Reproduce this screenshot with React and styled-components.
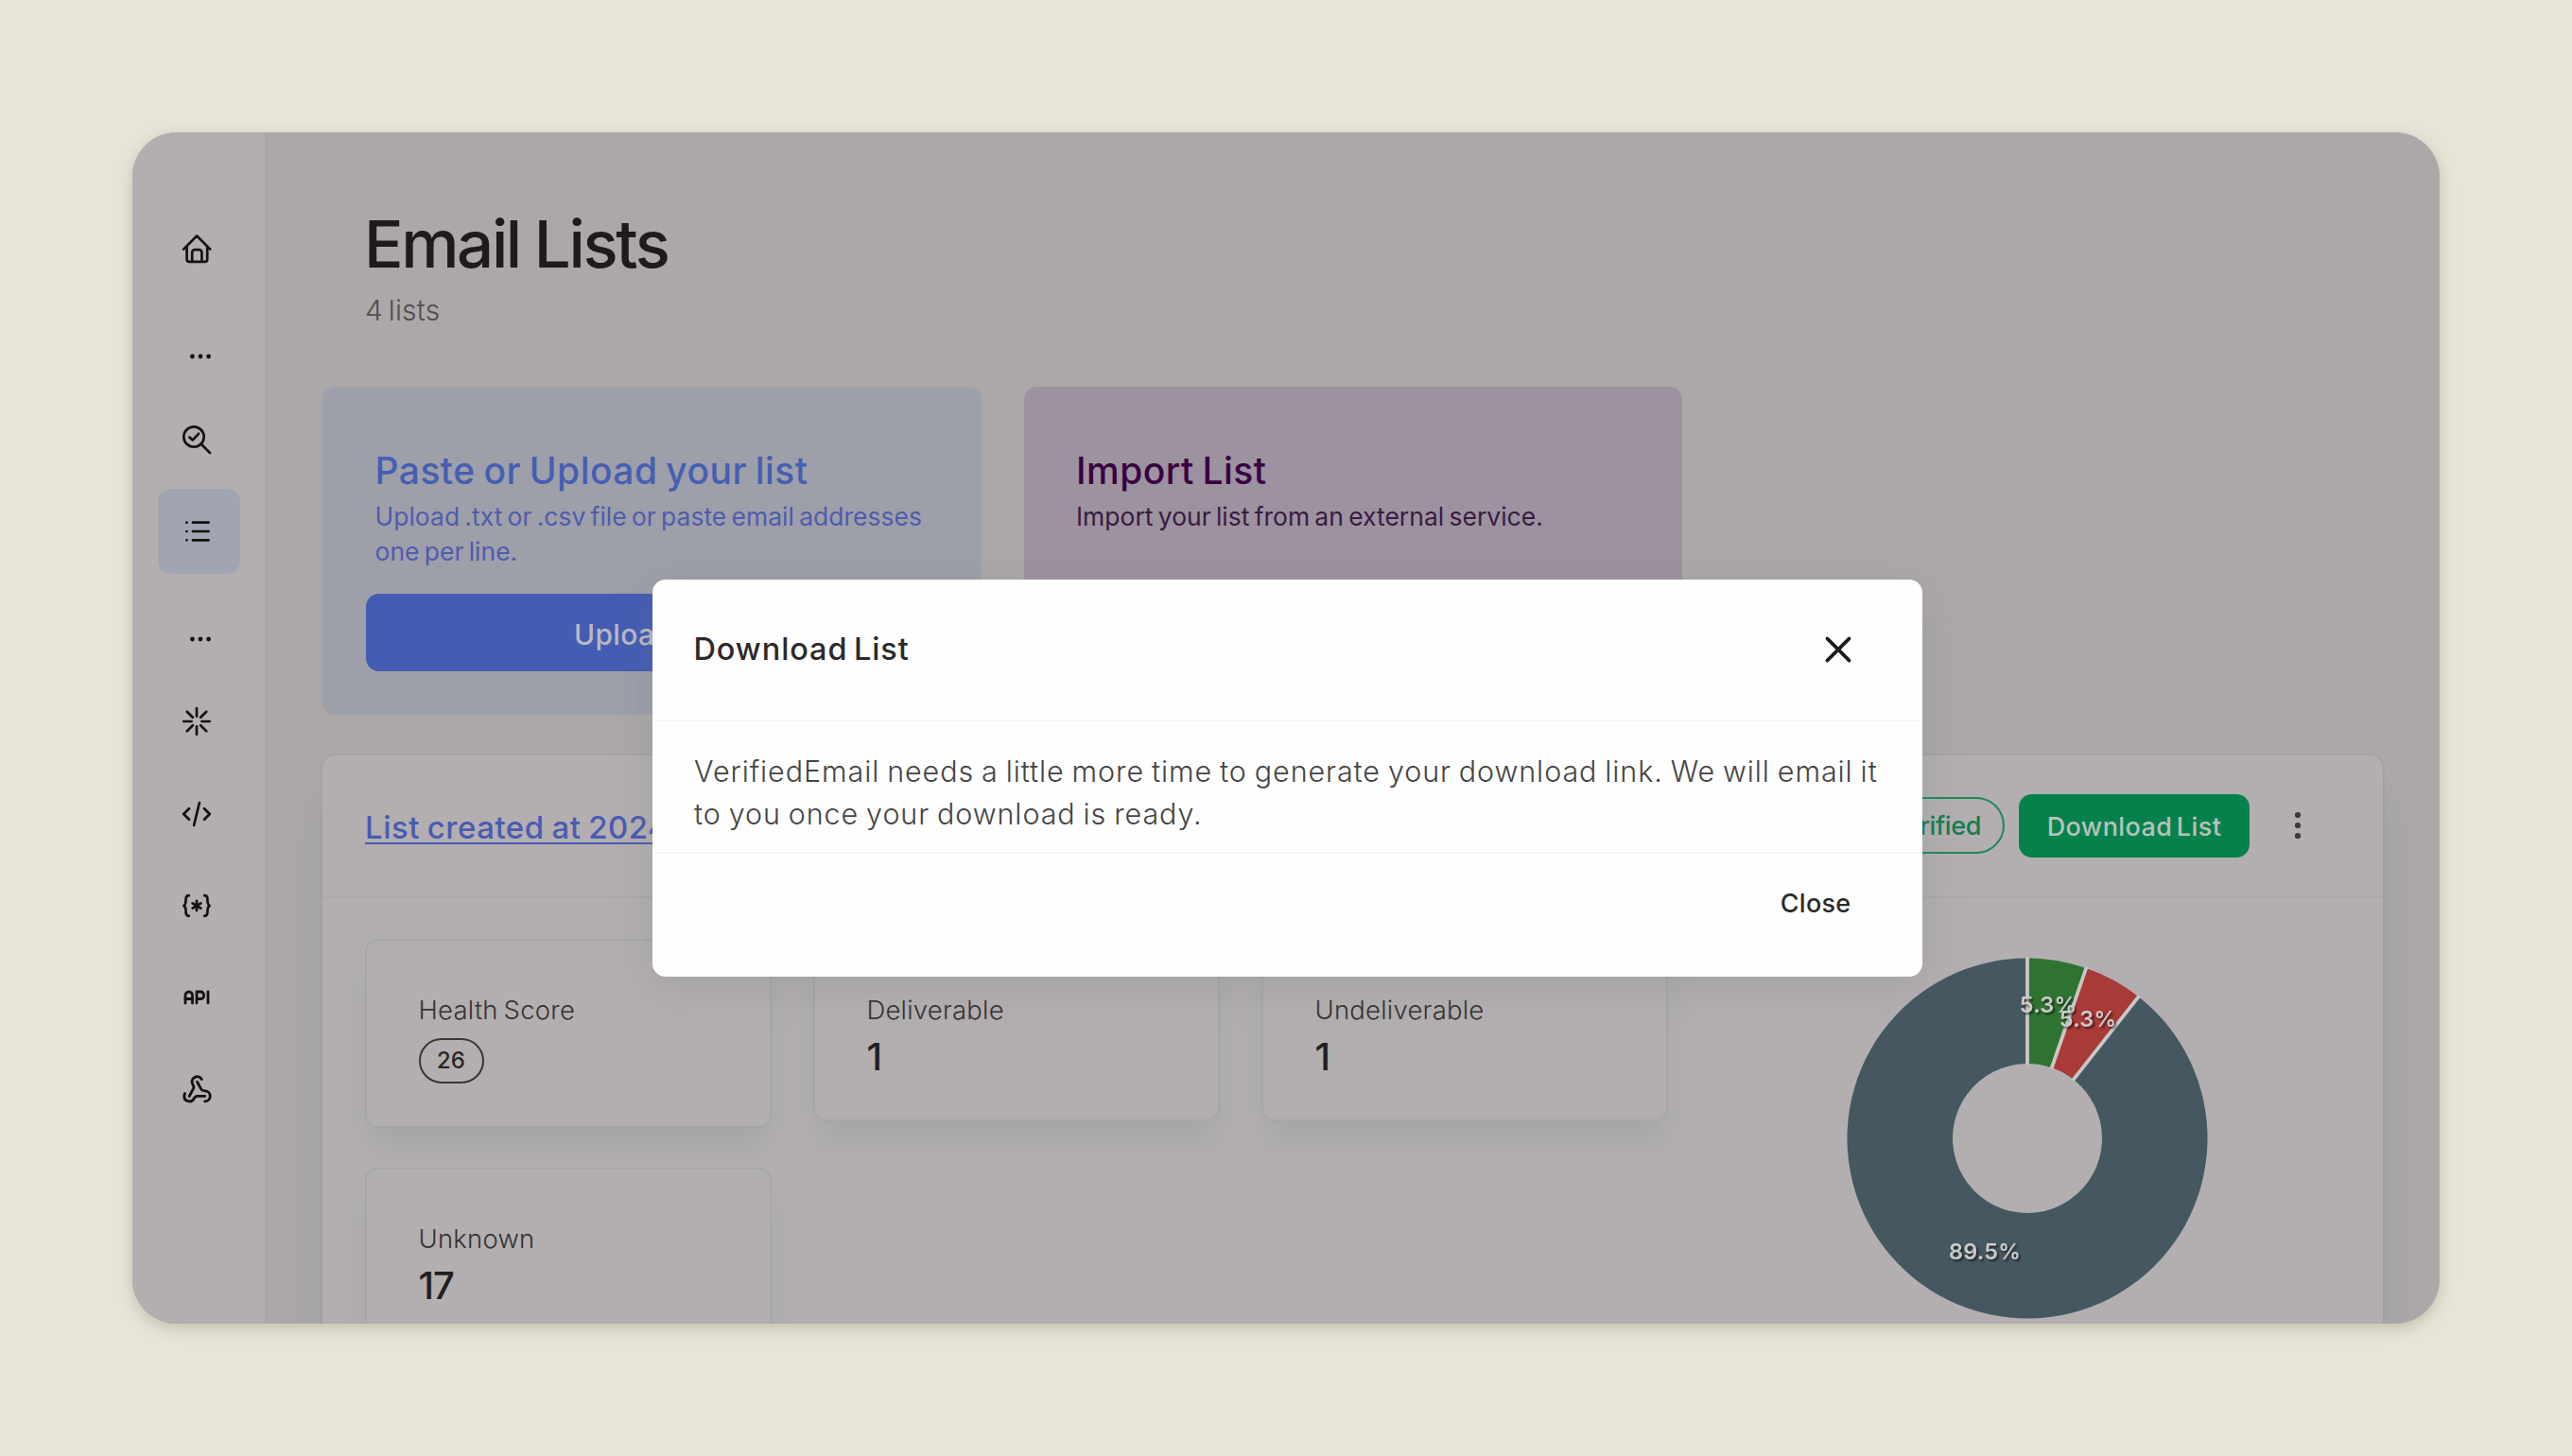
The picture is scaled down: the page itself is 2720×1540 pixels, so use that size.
import React, { useState } from 'react';
import styled, { createGlobalStyle, css } from 'styled-components';
import { Webhook } from 'lucide-react';
import { TbApi } from 'react-icons/tb';


const GlobalStyle = createGlobalStyle`
  *, *::before, *::after {
    box-sizing: border-box;
  }

  body {
    margin: 0;
    background: #e9e4d8;
    font-family: Inter, sans-serif;
    color: #1f1b1c;
  }

  h1, h2, p {
    margin: 0;
  }

  button {
    font-family: inherit;
    border: none;
    padding: 0;
    cursor: pointer;
  }
`;

const Page = styled.div`
  width: 2720px;
  height: 1540px;
  padding: 140px;
  background: #e9e4d8;
  overflow: hidden;
`;

const Window = styled.div`
  position: relative;
  display: flex;
  width: 2440px;
  height: 1260px;
  border-radius: 47px;
  overflow: hidden;
  background: #aca8a9;
  box-shadow: 0 5px 16px rgba(128, 134, 96, 0.38);
`;


/* sidebar */

const SSidebar = styled.nav`
  flex: none;
  display: flex;
  flex-direction: column;
  gap: 7.2px;
  width: 142px;
  padding: 78px 0 0 27px;
  background: #b3afb0;
  border-right: 2px solid #a8a4a5;
`;

const NavItem = styled.a`
  flex: none;
  display: flex;
  align-items: center;
  width: 87px;
  height: 90px;
  padding-left: 25px;
  border-radius: 14px;
  color: #141112;
  background: ${props => props.$active ? '#a0a5b1' : 'transparent'};

  svg {
    overflow: visible;
  }
`;

const NavGap = styled(NavItem)`
  height: 97.2px;
  padding: 27px 0 0 33px;
`;

const ApiIcon = styled(TbApi)`
  margin-left: -2px;
  stroke-width: 1.85px;
`;


/* page content */

const Content = styled.main`
  flex: 1;
  padding: 78px 59px 0;
`;

const Header = styled.header`
  padding-left: 44px;
  margin-bottom: 61px;
`;

const Title = styled.h1`
  font-size: 69px;
  line-height: 80px;
  font-weight: 500;
  letter-spacing: -2.4px;
  word-spacing: -1px;
`;

const Count = styled.p`
  margin: 10px 0 0 1px;
  font-size: 30px;
  line-height: 40px;
  font-weight: 300;
  letter-spacing: 0.2px;
  word-spacing: -3px;
  color: #514e4e;
`;

const Actions = styled.div`
  display: flex;
  gap: 45px;
  margin-bottom: 43px;
`;

const ActionCard = styled.section`
  display: flex;
  flex-direction: column;
  width: 696.5px;
  height: 346.5px;
  padding: 65px 45.5px 45.5px;
  border-radius: 14px;
  background: ${props => props.$purple ? '#9d929f' : '#9d9fa9'};
  color: ${props => props.$purple ? '#390141' : '#465eb4'};
`;

const ActionTitle = styled.h2`
  margin: 0 10px;
  font-size: 39px;
  line-height: 48px;
  font-weight: 500;
  letter-spacing: 0.45px;
  word-spacing: -2px;
`;

const ActionText = styled.p`
  margin: 6px 0 0 10px;
  font-size: 26.5px;
  line-height: 37.2px;
  font-weight: 400;
  letter-spacing: 0;
  word-spacing: -2.2px;
  white-space: nowrap;
  color: ${props => props.$purple ? '#3a1a43' : '#4e5cae'};
`;

const UploadButton = styled.button`
  height: 82px;
  margin-top: auto;
  padding-top: 3px;
  border-radius: 14px;
  background: ${props => props.$purple ? '#390141' : '#445db3'};
  color: #b8bac4;
  font-size: 30px;
  font-weight: 500;
  letter-spacing: 0.3px;
`;


/* list card */

const ListCard = styled.section`
  width: 2179px;
  height: 700px;
  border-radius: 14px;
  background: #b3afb0;
  box-shadow: 0 0 0 2px rgba(150, 152, 152, 0.3), 0 44px 44px rgba(120, 130, 130, 0.22);
`;

const ListHeader = styled.div`
  display: flex;
  align-items: center;
  height: 151px;
  padding: 0 85px 0 45px;
  border-bottom: 2px solid #aaa8a8;
`;

const ListLink = styled.a`
  flex: 1;
  padding-top: 3px;
  font-size: 33px;
  line-height: 44px;
  font-weight: 500;
  letter-spacing: 0.5px;
  word-spacing: -1.5px;
  color: #4a5bb2;
  text-decoration: underline;
  text-decoration-thickness: 2px;
  text-underline-offset: 4px;
`;

const Status = styled.span`
  display: flex;
  align-items: center;
  height: 60px;
  margin-right: 15px;
  padding: 1px 23px 0;
  border: 2px solid #1d8a5a;
  border-radius: 30px;
  color: #147d4f;
  font-size: 27px;
  font-weight: 500;
  letter-spacing: -0.4px;
`;

const DownloadButton = styled.button`
  width: 244px;
  height: 67px;
  padding-top: 3px;
  border-radius: 14px;
  background: #05824c;
  color: #b8c2ba;
  font-size: 27px;
  font-weight: 500;
  letter-spacing: 0.4px;
  word-spacing: -3px;
`;

const MoreButton = styled.button`
  display: flex;
  margin-left: 46px;
  background: none;
  color: #3b3839;
`;

const ListBody = styled.div`
  display: flex;
  padding: 43px 0 0 44.5px;
`;

const Stats = styled.div`
  display: grid;
  grid-template-columns: repeat(3, 430.5px);
  align-items: start;
  align-content: start;
  gap: 42px 43.5px;
`;

const StatCard = styled.div`
  padding: 54px 55px 45px;
  border: 2px solid #a5a7a7;
  border-radius: 14px;
  background: #b3afb0;
  box-shadow: 0 24px 30px -6px rgba(120, 130, 130, 0.22);
`;

const StatLabel = styled.p`
  font-size: 27.5px;
  line-height: 38px;
  font-weight: 300;
  letter-spacing: 0.2px;
  word-spacing: -2px;
  color: #363334;
`;

const StatValue = styled.p`
  margin: 7px 0 -2.5px;
  font-size: 40px;
  line-height: 48px;
  font-weight: 500;
  letter-spacing: -1px;
  color: #231f20;
`;

const Score = styled.span`
  display: inline-flex;
  align-items: center;
  justify-content: center;
  width: 69px;
  height: 48.5px;
  margin-top: 11px;
  border: 2px solid #3a3738;
  border-radius: 25px;
  font-size: 24px;
  font-weight: 500;
  color: #2a2727;
  vertical-align: top;
`;

const ChartArea = styled.div`
  flex: 1;
  display: flex;
  justify-content: center;
  padding: 18px 0 0 4px;
`;

const ChartText = styled.text`
  font-size: 23.5px;
  font-weight: 600;
  letter-spacing: 0.2px;
  fill: #cbcaca;
  text-anchor: middle;
  filter: drop-shadow(2px 2px 1px rgba(0, 0, 0, 0.55));
`;


/* modal */

const ModalLayer = styled.div`
  position: absolute;
  inset: 0;
  display: flex;
  justify-content: center;
  align-items: flex-start;
  padding: 472.5px 0 0 2px;
`;

const ModalBox = styled.div`
  width: 1343px;
  height: 420.5px;
  border-radius: 14px;
  background: #fefefe;
  box-shadow: 0 10px 44px rgba(110, 112, 125, 0.22);
`;

const divider = css`
  border-bottom: 2px solid #f5f5f6;
`;

const ModalHeader = styled.div`
  display: flex;
  align-items: center;
  justify-content: space-between;
  height: 150.5px;
  padding: 0 74px 0 44px;
  ${divider}
`;

const ModalTitle = styled.h2`
  font-size: 32.5px;
  font-weight: 500;
  letter-spacing: 0.9px;
  word-spacing: -3px;
  color: #2c2a2b;
`;

const IconButton = styled.button`
  display: flex;
  background: none;
  color: #1b1b1b;
`;

const ModalText = styled.p`
  height: 140px;
  padding: 31px 0 0 44.5px;
  font-size: 30.5px;
  line-height: 44.8px;
  font-weight: 300;
  letter-spacing: 0.9px;
  word-spacing: -1.5px;
  white-space: pre;
  color: #454444;
  ${divider}
`;

const ModalFooter = styled.div`
  display: flex;
  justify-content: flex-end;
  padding: 35px 75px 0;
`;

const CloseButton = styled.button`
  background: none;
  color: #2c2a2b;
  font-size: 27px;
  line-height: 36px;
  font-weight: 500;
  letter-spacing: 0.3px;
`;


/* icons, all drawn on a 32 grid with the same pen */

const Icon = ({ children, size = 32, width = 2.7 }) => (
  <svg width={size} height={size} viewBox="0 0 32 32" fill="none" stroke="currentColor"
    strokeWidth={width} strokeLinecap="round" strokeLinejoin="round">
    {children}
  </svg>
)

const HomeIcon = () => (
  <Icon>
    <path d="M2.2 16.6 L16.2 2.4 L30.2 16.6" />
    <path d="M5.6 14 V27.2 a2.6 2.6 0 0 0 2.6 2.6 H24.6 a2.6 2.6 0 0 0 2.6 -2.6 V14" />
    <path d="M11.2 29.6 V20 a2.8 2.8 0 0 1 2.8 -2.8 h4.6 a2.8 2.8 0 0 1 2.8 2.8 V29.6" />
  </Icon>
)

const SearchCheckIcon = () => (
  <Icon>
    <circle cx="13" cy="13" r="10.7" />
    <path d="M20.8 20.8 L30 30" />
    <path d="M8.4 13.4 L11.8 16.4 L18 9.8" />
  </Icon>
)

const ListIcon = () => (
  <Icon>
    <path d="M5.4 6.7 h.1 M5.4 16 h.1 M5.4 25.3 h.1" />
    <path d="M12 6.7 H28.6 M12 16 H28.6 M12 25.3 H28.6" />
  </Icon>
)

const SparkIcon = () => (
  <Icon>
    <path d="M16 2.2 V10.6 M16 21.4 V29.8 M2.2 16 H10.6 M21.4 16 H29.8" />
    <path d="M5.8 5.8 L11.8 11.8 M20.2 20.2 L26.2 26.2 M26.2 5.8 L20.2 11.8 M11.8 20.2 L5.8 26.2" />
  </Icon>
)

const CodeIcon = () => (
  <Icon>
    <path d="M8 10.2 L2.2 16 L8 21.8 M24 10.2 L29.8 16 L24 21.8" />
    <path d="M18.9 4 L13.1 28" />
  </Icon>
)

const VariableIcon = () => (
  <Icon>
    <path d="M7.8 5.2 C5 5.2 4.6 6.6 4.6 9 C4.6 12.6 4.6 14.8 2.4 16 C4.6 17.2 4.6 19.4 4.6 23 C4.6 25.4 5 26.8 7.8 26.8" />
    <path d="M24.2 5.2 C27 5.2 27.4 6.6 27.4 9 C27.4 12.6 27.4 14.8 29.6 16 C27.4 17.2 27.4 19.4 27.4 23 C27.4 25.4 27 26.8 24.2 26.8" />
    <path d="M16 10.9 V21.1 M11.6 13.4 L20.4 18.6 M20.4 13.4 L11.6 18.6" />
  </Icon>
)

const DotsIcon = () => (
  <svg width="24" height="8" viewBox="0 0 24 8" fill="currentColor">
    <circle cx="3.4" cy="4" r="2.4" />
    <circle cx="12" cy="4" r="2.4" />
    <circle cx="20.6" cy="4" r="2.4" />
  </svg>
)

const KebabIcon = () => (
  <svg width="10" height="30" viewBox="0 0 10 30" fill="currentColor">
    <circle cx="5" cy="4" r="3.1" />
    <circle cx="5" cy="15" r="3.1" />
    <circle cx="5" cy="26" r="3.1" />
  </svg>
)

const CloseIcon = () => (
  <Icon size={30} width={3.9}>
    <path d="M3.6 3.6 L28.4 28.4 M28.4 3.6 L3.6 28.4" />
  </Icon>
)


const slices = [
  { value: 5.3, color: '#2f7332', x: 215, y: 60 },
  { value: 5.3, color: '#a83a38', x: 257, y: 75 },
  { value: 89.5, color: '#455862', x: 148, y: 321 },
];

const Donut = () => {
  const center = 193;
  const outer = 190.5;
  const inner = 79;
  const total = slices.reduce((sum, slice) => sum + slice.value, 0);
  const point = (turn, r) => {
    const a = turn * Math.PI * 2;
    return `${center + r * Math.sin(a)} ${center - r * Math.cos(a)}`;
  };

  let turn = 0;
  const arcs = slices.map(slice => {
    const from = turn;
    turn += slice.value / total;
    return { ...slice, from, to: turn, large: turn - from > 0.5 ? 1 : 0 };
  });

  return (
    <svg width="386" height="386" viewBox="0 0 386 386">
      {arcs.map(({ from, to, large, color }) => (
        <path key={from} fill={color}
          d={`M${point(from, outer)} A${outer} ${outer} 0 ${large} 1 ${point(to, outer)} L${point(to, inner)} A${inner} ${inner} 0 ${large} 0 ${point(from, inner)} Z`}
        />
      ))}
      {arcs.map(({ from }) => (
        <path key={from} stroke="#c9c7c7" strokeWidth="3.8"
          d={`M${point(from, inner - 1)} L${point(from, outer + 1)}`}
        />
      ))}
      {arcs.map(({ from, value, x, y }) => (
        <ChartText key={from} x={x} y={y}>{value}%</ChartText>
      ))}
    </svg>
  );
}

const Sidebar = () => (
  <SSidebar>
    <NavItem><HomeIcon /></NavItem>
    <NavGap><DotsIcon /></NavGap>
    <NavItem><SearchCheckIcon /></NavItem>
    <NavItem $active><ListIcon /></NavItem>
    <NavGap><DotsIcon /></NavGap>
    <NavItem><SparkIcon /></NavItem>
    <NavItem><CodeIcon /></NavItem>
    <NavItem><VariableIcon /></NavItem>
    <NavItem><ApiIcon size={36} /></NavItem>
    <NavItem><Webhook size={33} strokeWidth={2.1} /></NavItem>
  </SSidebar>
)

const Stat = ({ label, value, score }) => (
  <StatCard>
    <StatLabel>{label}</StatLabel>
    {score ? <Score>{value}</Score> : <StatValue>{value}</StatValue>}
  </StatCard>
)

const DownloadModal = ({ close }) => (
  <ModalLayer>
    <ModalBox role="dialog">
      <ModalHeader>
        <ModalTitle>Download List</ModalTitle>
        <IconButton onClick={close} aria-label="Close"><CloseIcon /></IconButton>
      </ModalHeader>
      <ModalText>
        {'VerifiedEmail needs a little more time to generate your download link. We will email it\nto you once your download is ready.'}
      </ModalText>
      <ModalFooter>
        <CloseButton onClick={close}>Close</CloseButton>
      </ModalFooter>
    </ModalBox>
  </ModalLayer>
)


export default function App() {

  const [modalOpen, setModalOpen] = useState(true);

  return (
    <Page>
      <GlobalStyle />
      <Window>
        <Sidebar />
        <Content>
          <Header>
            <Title>Email Lists</Title>
            <Count>4 lists</Count>
          </Header>
          <Actions>
            <ActionCard>
              <ActionTitle>Paste or Upload your list</ActionTitle>
              <ActionText>Upload .txt or .csv file or paste email addresses<br />one per line.</ActionText>
              <UploadButton>Upload List</UploadButton>
            </ActionCard>
            <ActionCard $purple>
              <ActionTitle>Import List</ActionTitle>
              <ActionText $purple>Import your list from an external service.</ActionText>
              <UploadButton $purple>Import List</UploadButton>
            </ActionCard>
          </Actions>
          <ListCard>
            <ListHeader>
              <ListLink>List created at 2024</ListLink>
              <Status>Verified</Status>
              <DownloadButton onClick={_ => setModalOpen(true)}>Download List</DownloadButton>
              <MoreButton aria-label="More"><KebabIcon /></MoreButton>
            </ListHeader>
            <ListBody>
              <Stats>
                <Stat label="Health Score" value={26} score />
                <Stat label="Deliverable" value={1} />
                <Stat label="Undeliverable" value={1} />
                <Stat label="Unknown" value={17} />
              </Stats>
              <ChartArea>
                <Donut />
              </ChartArea>
            </ListBody>
          </ListCard>
        </Content>
        {
          modalOpen &&
          <DownloadModal close={_ => setModalOpen(false)} />
        }
      </Window>
    </Page>
  );
}
